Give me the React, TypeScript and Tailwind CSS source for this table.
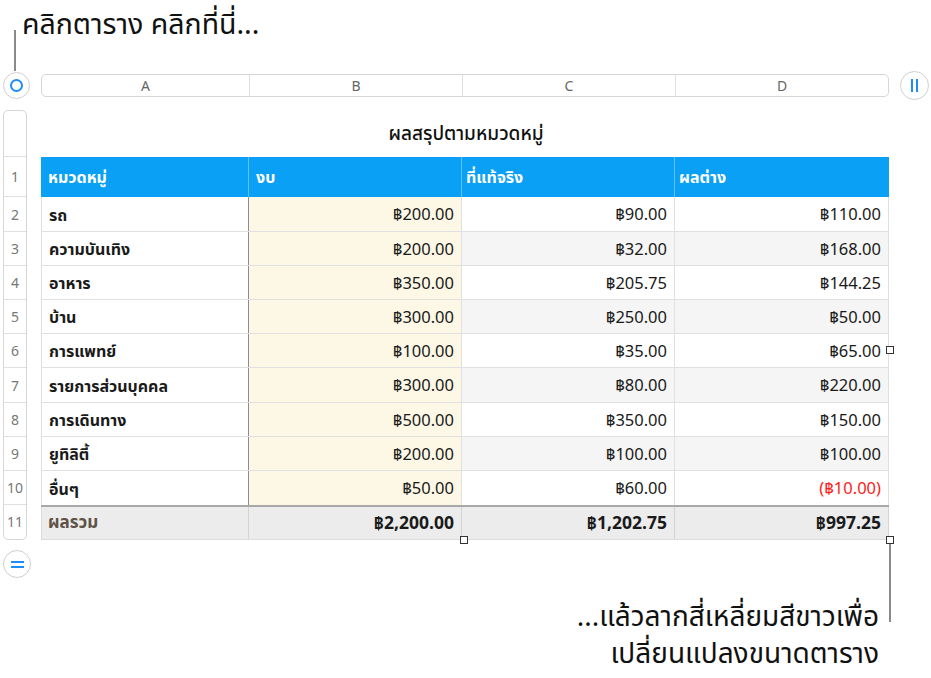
import React from "react";

const rows = [
  { n: 2, a: "รถ", b: "฿200.00", c: "฿90.00", d: "฿110.00", h: 35 },
  { n: 3, a: "ความบันเทิง", b: "฿200.00", c: "฿32.00", d: "฿168.00", h: 34 },
  { n: 4, a: "อาหาร", b: "฿350.00", c: "฿205.75", d: "฿144.25", h: 34 },
  { n: 5, a: "บ้าน", b: "฿300.00", c: "฿250.00", d: "฿50.00", h: 34 },
  { n: 6, a: "การแพทย์", b: "฿100.00", c: "฿35.00", d: "฿65.00", h: 34 },
  { n: 7, a: "รายการส่วนบุคคล", b: "฿300.00", c: "฿80.00", d: "฿220.00", h: 35 },
  { n: 8, a: "การเดินทาง", b: "฿500.00", c: "฿350.00", d: "฿150.00", h: 34 },
  { n: 9, a: "ยูทิลิตี้", b: "฿200.00", c: "฿100.00", d: "฿100.00", h: 34 },
  { n: 10, a: "อื่นๆ", b: "฿50.00", c: "฿60.00", d: "(฿10.00)", h: 34 },
];

const font = {
  fontFamily: '"Noto Sans Thai", "Noto Sans", "Liberation Sans", sans-serif',
};

function Handle({ className }: { className: string }) {
  return (
    <div
      className={
        "absolute w-[8px] h-[8px] bg-white border border-[#333] " + className
      }
    />
  );
}

export default function App() {
  return (
    <div
      className="relative w-[931px] h-[678px] bg-white text-[#1a1a1a] overflow-hidden"
      style={font}
    >
      {/* top caption */}
      <div className="h-[71px] pl-[22px] pt-[7px] text-[28.5px] leading-[38px] text-[#111]">
        คลิกตาราง คลิกที่นี่...
      </div>
      {/* top callout line */}
      <div className="absolute left-[14px] top-[30px] w-[2px] h-[41px] bg-[#8a8a8a]" />

      {/* column header row */}
      <div className="flex items-center h-[28px]">
        <div className="ml-[3px] w-[27px] h-[27px] rounded-full border border-[#cfcfcf] bg-white flex items-center justify-center">
          <div className="w-[13px] h-[13px] rounded-full border-2 border-[#1b8dfc]" />
        </div>
        <div className="ml-[11px] w-[848px] h-[23px] rounded-[5px] border border-[#d6d6d6] flex text-[14px] text-[#666]">
          <div className="w-[208px] pt-[2px] flex items-center justify-center border-r border-[#e0e0e0]">A</div>
          <div className="w-[213px] pt-[2px] flex items-center justify-center border-r border-[#e0e0e0]">B</div>
          <div className="w-[213px] pt-[2px] flex items-center justify-center border-r border-[#e0e0e0]">C</div>
          <div className="flex-1 pt-[2px] flex items-center justify-center">D</div>
        </div>
        <div className="ml-[11px] w-[29px] h-[29px] rounded-full border border-[#cfcfcf] bg-white flex items-center justify-center gap-[3px]">
          <div className="w-[2px] h-[13px] bg-[#1b8dfc]" />
          <div className="w-[2px] h-[13px] bg-[#1b8dfc]" />
        </div>
      </div>

      {/* table area */}
      <div className="flex mt-[11px]">
        {/* row headers */}
        <div className="ml-[3px] w-[24px] flex flex-col border border-[#d6d6d6] rounded-[5px] text-[14px] text-[#777] bg-white">
          <div className="h-[46px] border-b border-[#e0e0e0]" />
          <div className="h-[40px] pt-[2px] border-b border-[#e0e0e0] flex items-center justify-center">1</div>
          {rows.map((r) => (
            <div
              key={r.n}
              className="pt-[2px] border-b border-[#e0e0e0] flex items-center justify-center"
              style={{ height: r.h }}
            >
              {r.n}
            </div>
          ))}
          <div className="h-[33px] pt-[2px] flex items-center justify-center">11</div>
        </div>

        {/* table */}
        <div className="ml-[14px] w-[848px] flex flex-col">
          <div className="h-[47px] flex items-center justify-center text-[19px] font-medium text-[#111] pt-[3px] pl-[2px]">
            ผลสรุปตามหมวดหมู่
          </div>
          {/* header */}
          <div className="h-[40px] flex bg-[#0aa0f6] text-white font-bold text-[16px]">
            <div className="w-[208px] pl-[7px] pt-[2px] flex items-center border-r border-[#62c3fa]">หมวดหมู่</div>
            <div className="w-[213px] pl-[7px] pt-[2px] flex items-center border-r border-[#62c3fa]">งบ</div>
            <div className="w-[213px] pl-[4px] pt-[2px] flex items-center border-r border-[#62c3fa]">ที่แท้จริง</div>
            <div className="flex-1 pl-[4px] pt-[2px] flex items-center">ผลต่าง</div>
          </div>
          {rows.map((r, i) => {
            const alt = i % 2 === 1 ? "bg-[#f5f5f5]" : "bg-white";
            const last = i === rows.length - 1;
            return (
              <div
                key={r.n}
                className={
                  "flex text-[16.5px] " +
                  (last ? "" : "border-b border-[#e0e0e0]")
                }
                style={{ height: r.h }}
              >
                <div className="w-[208px] pl-[7px] pt-[3px] flex items-center font-bold text-[16px] bg-white border-r border-[#8c8c8c] border-l border-l-[#e0e0e0]">
                  {r.a}
                </div>
                <div className="w-[213px] pr-[7px] pt-[3px] flex items-center justify-end bg-[#fdf8e6] border-r border-[#e0e0e0]">
                  {r.b}
                </div>
                <div className={"w-[213px] pr-[7px] pt-[3px] flex items-center justify-end border-r border-[#e0e0e0] " + alt}>
                  {r.c}
                </div>
                <div
                  className={
                    "flex-1 pr-[7px] pt-[3px] flex items-center justify-end border-r border-[#e0e0e0] " +
                    alt +
                    (r.d.startsWith("(") ? " text-[#ff1a1a]" : "")
                  }
                >
                  {r.d}
                </div>
              </div>
            );
          })}
          {/* footer */}
          <div className="h-[35px] flex bg-[#ececec] border-t-2 border-[#a8a8a8] font-bold text-[17.5px] border-b border-b-[#dcdcdc]">
            <div className="w-[208px] pl-[6px] pt-[2px] flex items-center text-[17px] text-[#5e5246] border-r border-[#d4d4d4] border-l border-l-[#dcdcdc]">ผลรวม</div>
            <div className="w-[213px] pr-[7px] pt-[2px] flex items-center justify-end border-r border-[#d4d4d4]">฿2,200.00</div>
            <div className="w-[213px] pr-[7px] pt-[2px] flex items-center justify-end border-r border-[#d4d4d4]">฿1,202.75</div>
            <div className="flex-1 pr-[7px] pt-[2px] flex items-center justify-end border-r border-[#d4d4d4]">฿997.25</div>
          </div>
        </div>
      </div>

      {/* bottom add-row circle */}
      <div className="mt-[10px] ml-[3px] w-[28px] h-[28px] rounded-full border border-[#cfcfcf] bg-white flex flex-col items-center justify-center gap-[3px]">
        <div className="w-[13px] h-[2px] bg-[#1b8dfc]" />
        <div className="w-[13px] h-[2px] bg-[#1b8dfc]" />
      </div>

      {/* bottom caption */}
      <div className="mt-[21px] w-[879px] text-right text-[28px] leading-[37px] text-[#111]">
        <div>...แล้วลากสี่เหลี่ยมสีขาวเพื่อ</div>
        <div>เปลี่ยนแปลงขนาดตาราง</div>
      </div>

      {/* handles */}
      <Handle className="left-[886px] top-[346px]" />
      <Handle className="left-[460px] top-[536px]" />
      <Handle className="left-[886px] top-[536px]" />
      {/* bottom callout line */}
      <div className="absolute left-[889px] top-[544px] w-[2px] h-[78px] bg-[#8a8a8a]" />
    </div>
  );
}
